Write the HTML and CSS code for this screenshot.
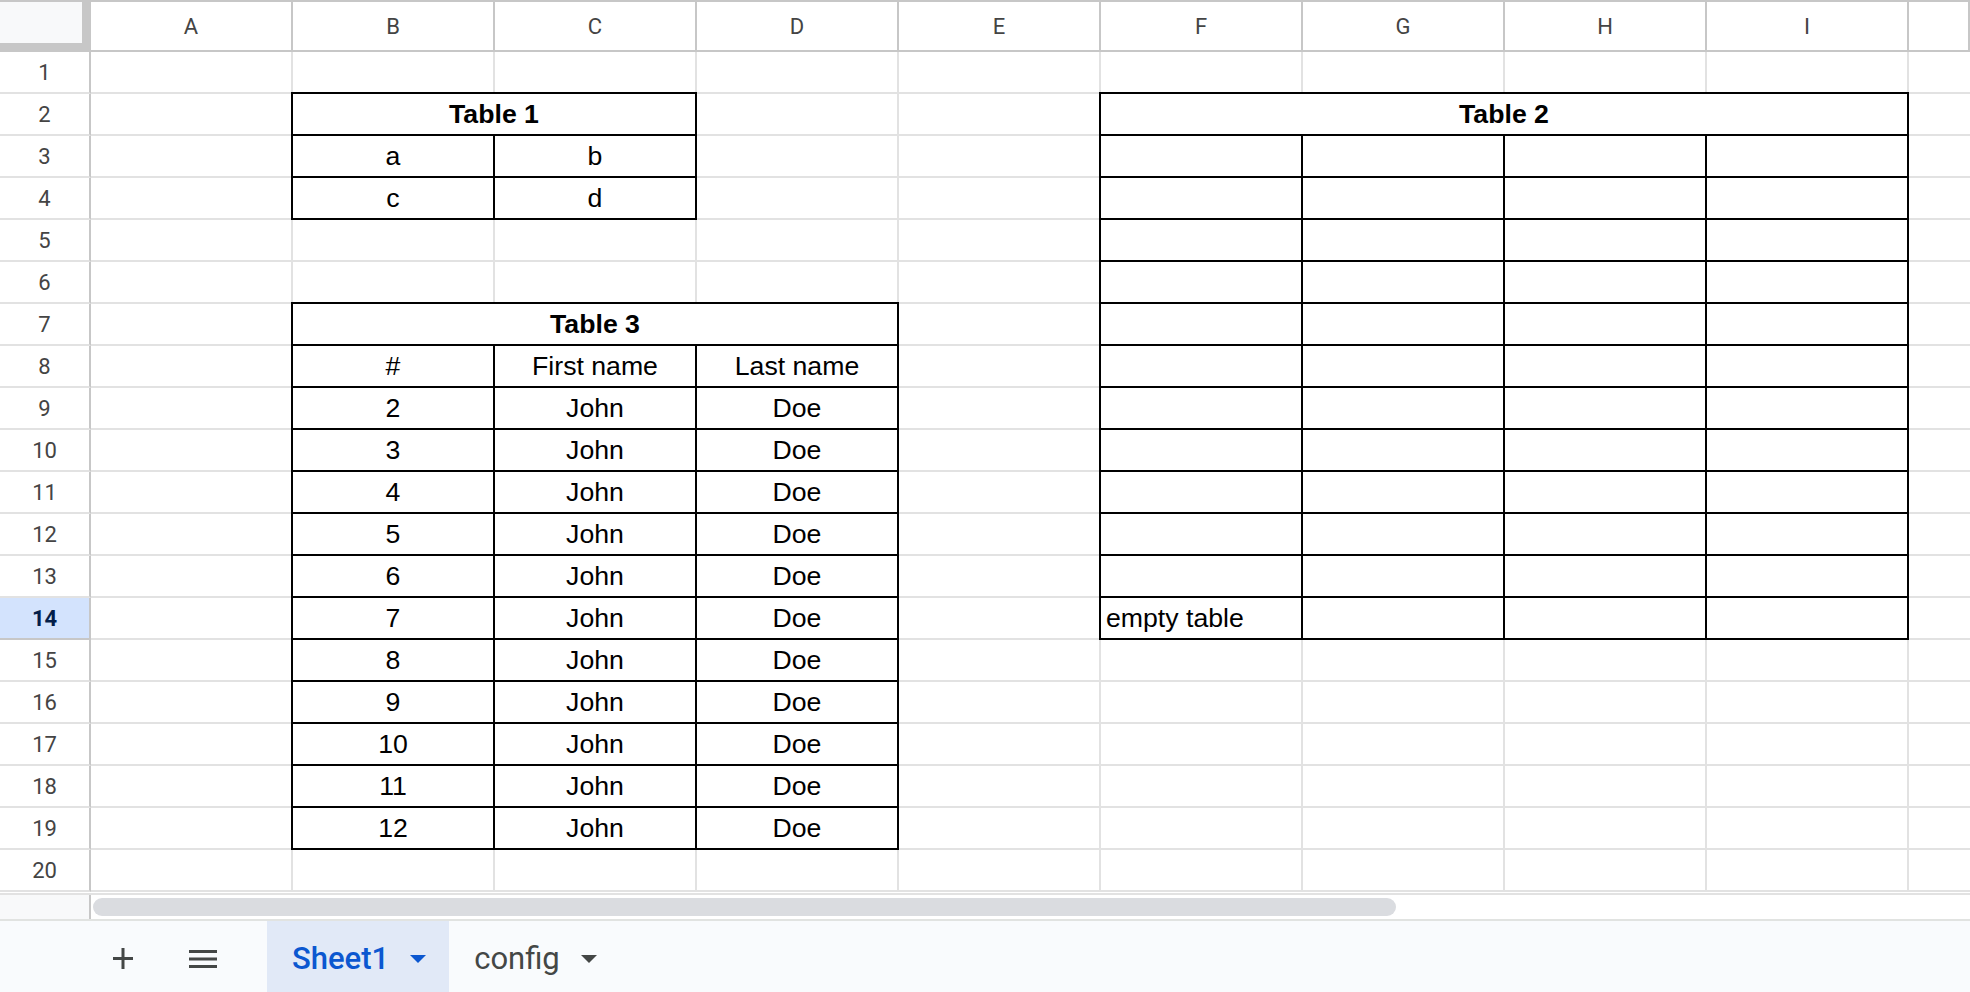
FILE: index.html
```html
<!DOCTYPE html>
<html lang="en">
<head>
    <meta charset="UTF-8">
    <title>Sheet1</title>
    <link rel="stylesheet" href="styles.css">
</head>
<body>

<div class="sheet">
    <div class="grid-bg"></div>
    <div class="corner"></div>

    <div class="ch">A</div>
    <div class="ch">B</div>
    <div class="ch">C</div>
    <div class="ch">D</div>
    <div class="ch">E</div>
    <div class="ch">F</div>
    <div class="ch">G</div>
    <div class="ch">H</div>
    <div class="ch">I</div>
    <div class="ch"></div>

    <div class="rh">1</div>
    <div class="rh">2</div>
    <div class="rh">3</div>
    <div class="rh">4</div>
    <div class="rh">5</div>
    <div class="rh">6</div>
    <div class="rh">7</div>
    <div class="rh">8</div>
    <div class="rh">9</div>
    <div class="rh">10</div>
    <div class="rh">11</div>
    <div class="rh">12</div>
    <div class="rh">13</div>
    <div class="rh sel">14</div>
    <div class="rh">15</div>
    <div class="rh">16</div>
    <div class="rh">17</div>
    <div class="rh">18</div>
    <div class="rh">19</div>
    <div class="rh">20</div>

    <!-- Table 1 : B2:C4 -->
    <div class="tbl tbl-1">
        <div class="tc title">Table 1</div>
        <div class="tc">a</div><div class="tc">b</div>
        <div class="tc">c</div><div class="tc">d</div>
    </div>

    <!-- Table 2 : F2:I14 -->
    <div class="tbl tbl-2">
        <div class="tc title">Table 2</div>
        <div class="tc"></div><div class="tc"></div><div class="tc"></div><div class="tc"></div>
        <div class="tc"></div><div class="tc"></div><div class="tc"></div><div class="tc"></div>
        <div class="tc"></div><div class="tc"></div><div class="tc"></div><div class="tc"></div>
        <div class="tc"></div><div class="tc"></div><div class="tc"></div><div class="tc"></div>
        <div class="tc"></div><div class="tc"></div><div class="tc"></div><div class="tc"></div>
        <div class="tc"></div><div class="tc"></div><div class="tc"></div><div class="tc"></div>
        <div class="tc"></div><div class="tc"></div><div class="tc"></div><div class="tc"></div>
        <div class="tc"></div><div class="tc"></div><div class="tc"></div><div class="tc"></div>
        <div class="tc"></div><div class="tc"></div><div class="tc"></div><div class="tc"></div>
        <div class="tc"></div><div class="tc"></div><div class="tc"></div><div class="tc"></div>
        <div class="tc"></div><div class="tc"></div><div class="tc"></div><div class="tc"></div>
        <div class="tc left">empty table</div><div class="tc"></div><div class="tc"></div><div class="tc"></div>
    </div>

    <!-- Table 3 : B7:D19 -->
    <div class="tbl tbl-3">
        <div class="tc title">Table 3</div>
        <div class="tc">#</div><div class="tc">First name</div><div class="tc">Last name</div>
        <div class="tc">2</div><div class="tc">John</div><div class="tc">Doe</div>
        <div class="tc">3</div><div class="tc">John</div><div class="tc">Doe</div>
        <div class="tc">4</div><div class="tc">John</div><div class="tc">Doe</div>
        <div class="tc">5</div><div class="tc">John</div><div class="tc">Doe</div>
        <div class="tc">6</div><div class="tc">John</div><div class="tc">Doe</div>
        <div class="tc">7</div><div class="tc">John</div><div class="tc">Doe</div>
        <div class="tc">8</div><div class="tc">John</div><div class="tc">Doe</div>
        <div class="tc">9</div><div class="tc">John</div><div class="tc">Doe</div>
        <div class="tc">10</div><div class="tc">John</div><div class="tc">Doe</div>
        <div class="tc">11</div><div class="tc">John</div><div class="tc">Doe</div>
        <div class="tc">12</div><div class="tc">John</div><div class="tc">Doe</div>
    </div>
</div>

<div class="hscroll">
    <div class="hscroll-corner"></div>
    <div class="hscroll-thumb"></div>
</div>

<div class="tabbar">
    <div class="tab-icon">
        <svg width="20" height="21" viewBox="0 0 20 21"><path d="M10 0v21M0 10.5h20" stroke="#444746" stroke-width="3" fill="none"/></svg>
    </div>
    <div class="tab-icon menu-icon">
        <svg width="28" height="18" viewBox="0 0 28 18"><path d="M0 1.5h28M0 9h28M0 16.5h28" stroke="#444746" stroke-width="3" fill="none"/></svg>
    </div>
    <div class="tab active">
        <span>Sheet1</span>
        <svg width="16" height="8" viewBox="0 0 16 8"><polygon points="0,0 16,0 8,8" fill="#0b57d0"/></svg>
    </div>
    <div class="tab">
        <span>config</span>
        <svg width="16" height="8" viewBox="0 0 16 8"><polygon points="0,0 16,0 8,8" fill="#444746"/></svg>
    </div>
</div>

</body>
</html>
```

FILE: styles.css
```css
body {
    margin: 0;
    width: 1970px;
    height: 992px;
    overflow: hidden;
    background-color: #fff;
    font-family: 'Liberation Sans', Arial, sans-serif;
}

.sheet {
    display: grid;
    grid-template-columns: 91px repeat(9, 202px) 1fr;
    grid-template-rows: 50px repeat(20, 42px);
    border-top: 2px solid #c7c7c7;
}

.grid-bg {
    grid-column: 2 / -1;
    grid-row: 2 / -1;
    background-image:
        linear-gradient(to right, transparent 200px, #e2e2e2 200px),
        linear-gradient(to bottom, transparent 40px, #e2e2e2 40px);
    background-size: 202px 100%, 100% 42px;
}

.corner {
    grid-column: 1;
    grid-row: 1;
    background-color: #f8f9fa;
    border-right: 9px solid #c7c7c7;
    border-bottom: 9px solid #c7c7c7;
}

.ch, .rh {
    display: flex;
    justify-content: center;
    align-items: center;
    font-family: Roboto, 'Liberation Sans', sans-serif;
    font-size: 22px;
    color: #444;
    background-color: #fff;
}

.ch {
    grid-row: 1;
    border-right: 2px solid #c7c7c7;
    border-bottom: 2px solid #c7c7c7;
}

.rh {
    grid-column: 1;
    border-right: 2px solid #c7c7c7;
    border-bottom: 2px solid #e2e2e2;
}

.rh.sel {
    background-color: #d3e3fd;
    color: #041e49;
    font-weight: 700;
    border-bottom-color: #c7c7c7;
}

/* tables sit on the grid, borders pulled over the gridlines */
.tbl {
    display: grid;
    grid-auto-rows: 42px;
    margin: -2px 0 0 -2px;
    border-left: 2px solid #000;
    border-top: 2px solid #000;
    background-color: #fff;
}

.tbl-1 {
    grid-column: 3 / 5;
    grid-row: 3 / 6;
    grid-template-columns: repeat(2, 202px);
}

.tbl-2 {
    grid-column: 7 / 11;
    grid-row: 3 / 16;
    grid-template-columns: repeat(4, 202px);
}

.tbl-3 {
    grid-column: 3 / 6;
    grid-row: 8 / 21;
    grid-template-columns: repeat(3, 202px);
}

.tc {
    display: flex;
    justify-content: center;
    align-items: center;
    border-right: 2px solid #000;
    border-bottom: 2px solid #000;
    font-size: 26.67px;
    color: #000;
    white-space: nowrap;
}

.tc.title {
    grid-column: 1 / -1;
    font-weight: 700;
}

.tc.left {
    justify-content: flex-start;
    padding-left: 5px;
}

.hscroll {
    display: flex;
    height: 24px;
    margin-top: 1px;
    border-top: 2px solid #e2e2e2;
    border-bottom: 2px solid #e1e3e1;
}

.hscroll-corner {
    width: 89px;
    background-color: #f8f9fa;
    border-right: 2px solid #c7c7c7;
}

.hscroll-thumb {
    width: 1303px;
    height: 18px;
    margin: 3px 0 0 2px;
    border-radius: 9px;
    background-color: #dadce0;
}

.tabbar {
    display: flex;
    height: 71px;
    padding-left: 113px;
    background-color: #f9fbfd;
    font-family: Roboto, 'Liberation Sans', sans-serif;
    font-size: 31px;
    color: #444746;
}

.tab-icon {
    display: flex;
    align-items: center;
    padding-top: 4px;
}

.menu-icon {
    margin-left: 56px;
    margin-right: 50px;
}

.tab {
    display: flex;
    align-items: center;
    gap: 21px;
    padding: 4px 23px 0 25px;
}

.tab.active {
    background-color: #e1e9f7;
    color: #0b57d0;
    font-weight: 500;
}
```
